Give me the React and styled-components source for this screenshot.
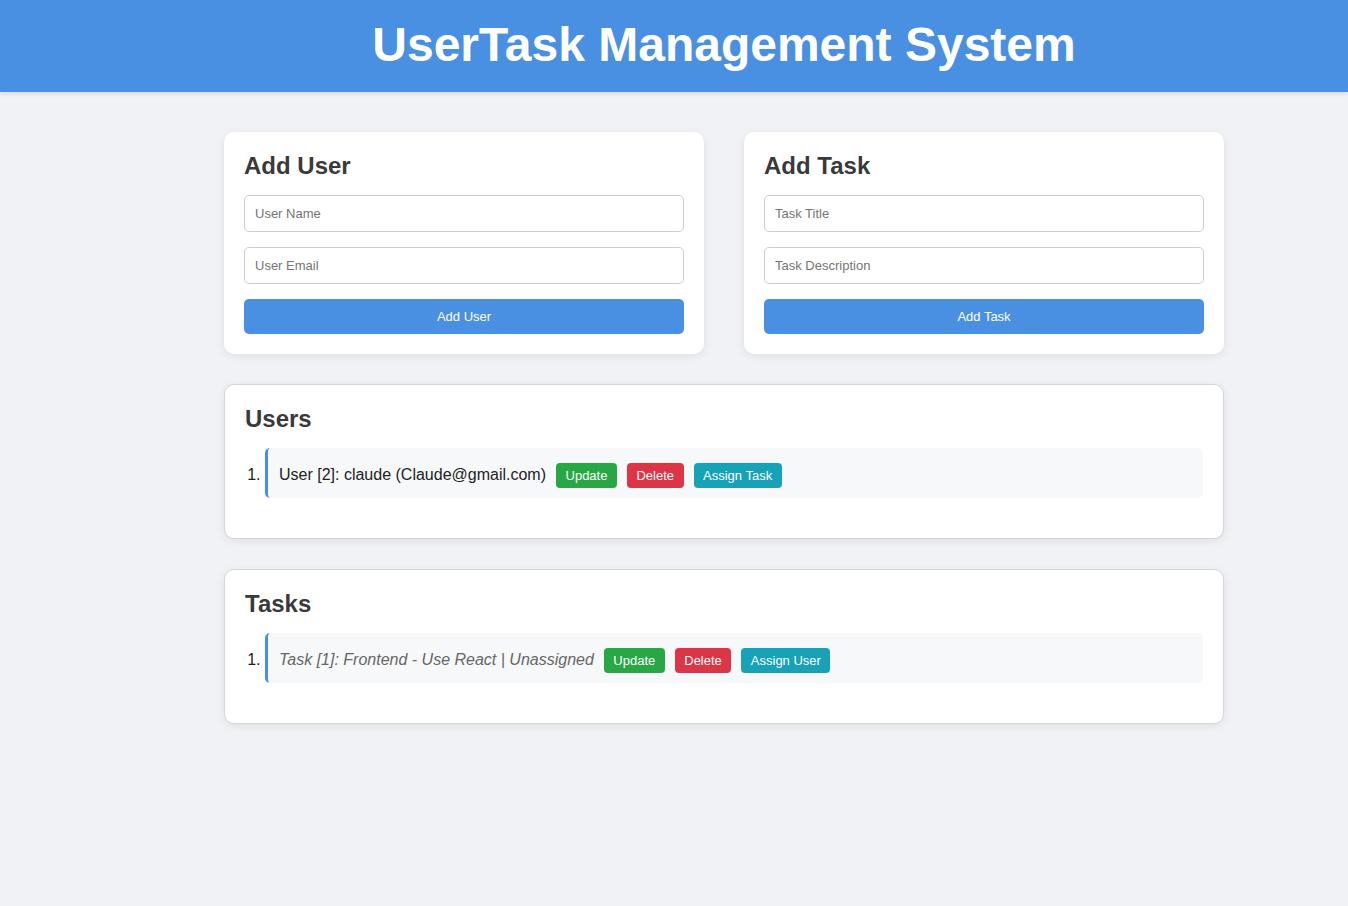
import React from "react";
import styled, { createGlobalStyle } from "styled-components";

const GlobalStyle = createGlobalStyle`
  body {
    margin: 0;
    background: #f0f2f5;
    font-family: "Liberation Sans", Arial, sans-serif;
    color: #333;
  }
`;

const Header = styled.header`
  box-sizing: border-box;
  background: #4a90e2;
  height: 92px;
  padding: 0 0 4px 100px;
  display: flex;
  align-items: center;
  justify-content: center;
  box-shadow: 0 2px 4px rgba(0, 0, 0, 0.1);
  h1 {
    margin: 0;
    color: #fff;
    font-size: 48px;
    font-weight: bold;
  }
`;

const Page = styled.div`
  padding: 40px 0 40px 100px;
`;

const Content = styled.main`
  width: 1000px;
  margin: 0 auto;
  display: flex;
  flex-direction: column;
  gap: 30px;
`;

const FormRow = styled.div`
  display: grid;
  grid-template-columns: 1fr 1fr;
  gap: 40px;
`;

const Card = styled.section`
  background: #fff;
  border-radius: 10px;
  padding: 20px;
  box-shadow: 0 2px 8px rgba(0, 0, 0, 0.08);
  border: ${props => (props.bordered ? "1px solid #d6d6d6" : "none")};
  h2 {
    margin: 0 0 15px;
    font-size: 24px;
    line-height: 28px;
    color: #3a3a3a;
  }
`;

const Form = styled.form`
  display: flex;
  flex-direction: column;
  gap: 15px;
`;

const Input = styled.input`
  box-sizing: border-box;
  height: 37px;
  padding: 0 10px;
  border: 1px solid #ccc;
  border-radius: 5px;
  font-family: inherit;
  font-size: 13px;
  &::placeholder {
    color: #757575;
  }
`;

const SubmitButton = styled.button`
  height: 35px;
  border: none;
  border-radius: 5px;
  background: #4a90e2;
  color: #fff;
  font-family: inherit;
  font-size: 13px;
`;

const List = styled.ol`
  margin: 0 0 20px;
  padding-left: 20px;
  font-size: 16px;
  color: #222;
`;

const Item = styled.li`
  box-sizing: border-box;
  background: #f7f8fa;
  border-left: 3px solid #4a90e2;
  border-radius: 5px;
  padding: 4px 11px 0;
  height: 50px;
  line-height: 46px;
`;

const ItemText = styled.span`
  font-style: ${props => (props.muted ? "italic" : "normal")};
  color: ${props => (props.muted ? "#666" : "#222")};
  margin-right: 10px;
`;

const colors = {
  update: "#28a745",
  delete: "#dc3545",
  assign: "#17a2b8"
};

const ActionButton = styled.button`
  height: 25px;
  padding: 0 9.5px;
  margin-right: 10px;
  border: none;
  border-radius: 4px;
  background: ${props => colors[props.kind]};
  color: #fff;
  font-family: inherit;
  font-size: 13px;
  vertical-align: middle;
`;

export default function App() {
  return (
    <>
      <GlobalStyle />
      <Header>
        <h1>UserTask Management System</h1>
      </Header>
      <Page>
        <Content>
          <FormRow>
            <Card>
              <h2>Add User</h2>
              <Form onSubmit={e => e.preventDefault()}>
                <Input placeholder="User Name" />
                <Input placeholder="User Email" />
                <SubmitButton>Add User</SubmitButton>
              </Form>
            </Card>
            <Card>
              <h2>Add Task</h2>
              <Form onSubmit={e => e.preventDefault()}>
                <Input placeholder="Task Title" />
                <Input placeholder="Task Description" />
                <SubmitButton>Add Task</SubmitButton>
              </Form>
            </Card>
          </FormRow>
          <Card bordered>
            <h2>Users</h2>
            <List>
              <Item>
                <ItemText>User [2]: claude (Claude@gmail.com)</ItemText>
                <ActionButton kind="update">Update</ActionButton>
                <ActionButton kind="delete">Delete</ActionButton>
                <ActionButton kind="assign">Assign Task</ActionButton>
              </Item>
            </List>
          </Card>
          <Card bordered>
            <h2>Tasks</h2>
            <List>
              <Item>
                <ItemText muted>
                  Task [1]: Frontend - Use React | Unassigned
                </ItemText>
                <ActionButton kind="update">Update</ActionButton>
                <ActionButton kind="delete">Delete</ActionButton>
                <ActionButton kind="assign">Assign User</ActionButton>
              </Item>
            </List>
          </Card>
        </Content>
      </Page>
    </>
  );
}
